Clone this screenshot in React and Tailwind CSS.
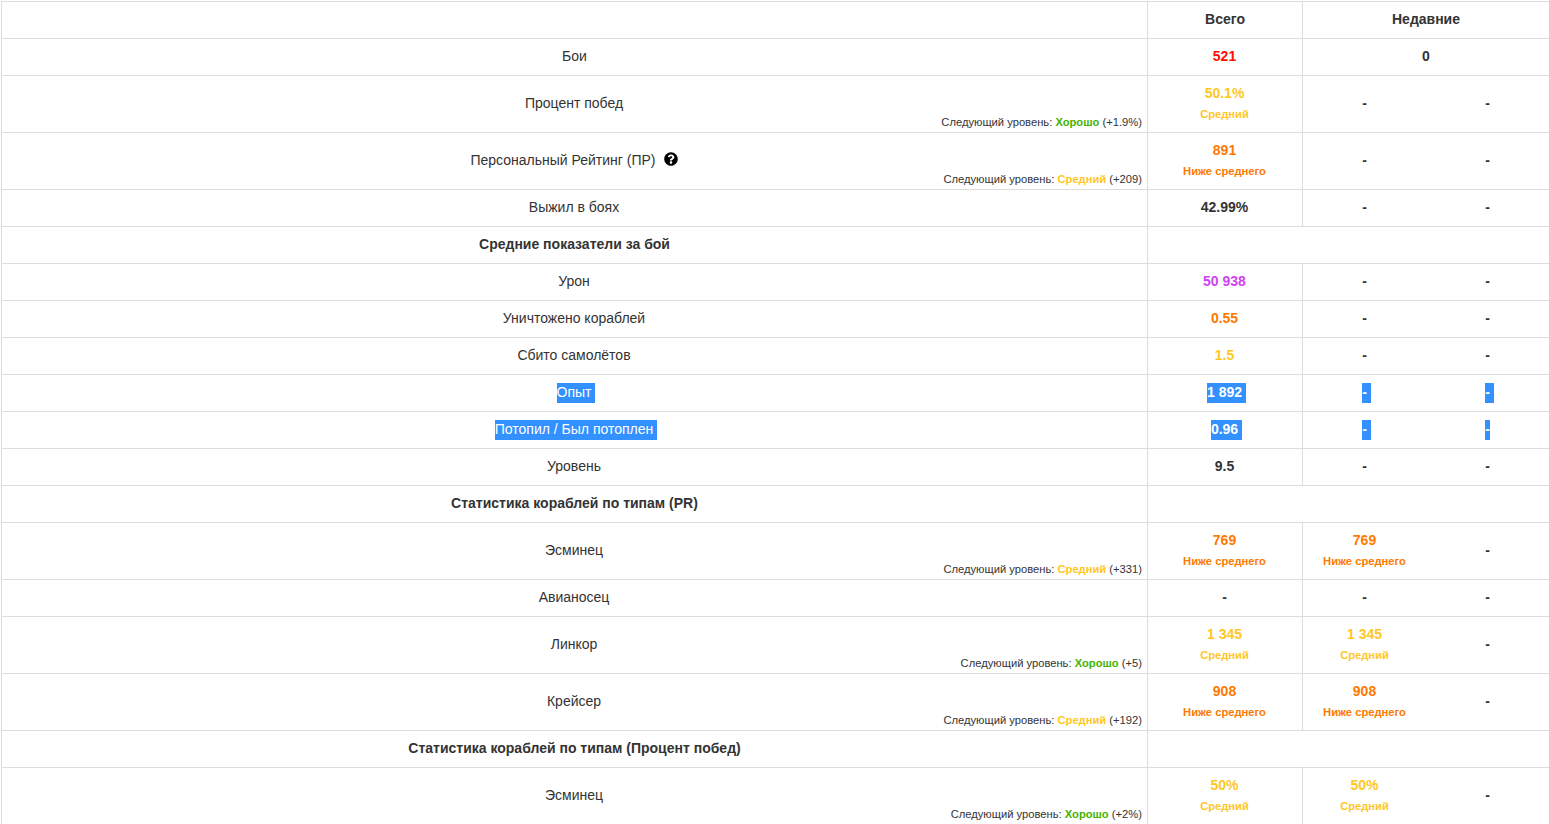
import React from 'react';
import { FaQuestionCircle } from 'react-icons/fa';

const BAD = 'text-[#fe0e00]';
const LOW = 'text-[#fe7903]';
const AVG = 'text-[#ffc71f]';
const GOOD = 'text-[#44b300]';
const PURPLE = 'text-[#d042f3]';
const PLAIN = 'text-[#333333]';

const levelColor = { 'Ниже среднего': LOW, 'Средний': AVG, 'Хорошо': GOOD };

const cellBase = 'border-t border-[#dddddd] text-center align-middle';
const cellPad = 'pt-[7px] pb-[9px] px-2';
const cellPadLeft = 'pt-[7px] pb-[9px] pl-2 pr-[9px]';

// selected text has the browser's trailing space highlighted too
function Selected({ children, tight }) {
  return (
    <span className={`-mb-px inline-block bg-[#3390ff] pb-[2px] leading-[18px] text-white ${tight ? '' : 'pr-1 -mr-1'}`}>
      {children}
    </span>
  );
}

function Stat({ value, color = PLAIN, level, selected, tight }) {
  if (value === undefined) return <div className={`${PLAIN} leading-5`}>-</div>;
  return (
    <>
      <div className={`${selected ? '' : color} leading-5`}>
        {selected ? <Selected tight={tight}>{value}</Selected> : value}
      </div>
      {level && <div className={`${levelColor[level]} mt-px -mb-px text-[11.2px] leading-5`}>{level}</div>}
    </>
  );
}

function NextLevel({ level, diff }) {
  return (
    <div className="pt-[2px] pr-[5px] text-right text-[11.2px] leading-[14px] text-[#333333]">
      Следующий уровень: <b className={levelColor[level]}>{level}</b> ({diff})
    </div>
  );
}

function Row({ label, next, help, selected, total, recent, last }) {
  return (
    <tr>
      <td className={`${cellBase} border-l ${next ? 'p-0 align-top' : cellPadLeft}`}>
        <div className={`leading-5 ${next ? 'pt-[17px] pr-px' : ''}`}>
          {selected ? <Selected>{label}</Selected> : label}
          {help && <FaQuestionCircle className="ml-[8px] inline-block size-[14px] align-[-1px] text-black" />}
        </div>
        {next && <NextLevel {...next} />}
      </td>
      <td className={`${cellBase} border-l ${cellPadLeft} font-bold`}>
        <Stat {...total} selected={selected} />
      </td>
      <td className={`${cellBase} border-l ${cellPad} font-bold`}>
        <Stat {...recent} selected={selected} value={recent?.value ?? (selected ? '-' : undefined)} />
      </td>
      <td className={`${cellBase} ${cellPad} font-bold`}>
        <Stat {...last} selected={selected} tight={selected === 'tight'} value={selected ? '-' : undefined} />
      </td>
    </tr>
  );
}

function Section({ title }) {
  return (
    <tr>
      <td className={`${cellBase} border-l ${cellPad} font-bold leading-5`}>{title}</td>
      <td colSpan={3} className={`${cellBase} border-l ${cellPad} leading-5`}>&nbsp;</td>
    </tr>
  );
}

export default function App() {
  return (
    <div className="h-screen overflow-hidden bg-white pt-px pl-px font-['Liberation_Sans',Arial,sans-serif] text-sm text-[#333333]">
      <table className="w-[1548px] table-fixed border-separate border-spacing-0">
        <colgroup>
          <col className="w-[1146px]" />
          <col className="w-[155px]" />
          <col className="w-[124px]" />
          <col className="w-[123px]" />
        </colgroup>
        <tbody>
          <tr>
            <td className={`${cellBase} border-l ${cellPad} leading-5`}>&nbsp;</td>
            <td className={`${cellBase} border-l ${cellPad} font-bold leading-5`}>Всего</td>
            <td colSpan={2} className={`${cellBase} border-l ${cellPad} font-bold leading-5`}>Недавние</td>
          </tr>
          <tr>
            <td className={`${cellBase} border-l ${cellPad} leading-5`}>Бои</td>
            <td className={`${cellBase} border-l ${cellPadLeft} font-bold leading-5 ${BAD}`}>521</td>
            <td colSpan={2} className={`${cellBase} border-l ${cellPad} font-bold leading-5`}>0</td>
          </tr>
          <Row
            label="Процент побед"
            next={{ level: 'Хорошо', diff: '+1.9%' }}
            total={{ value: '50.1%', color: AVG, level: 'Средний' }}
          />
          <Row
            label="Персональный Рейтинг (ПР)"
            help
            next={{ level: 'Средний', diff: '+209' }}
            total={{ value: '891', color: LOW, level: 'Ниже среднего' }}
          />
          <Row label="Выжил в боях" total={{ value: '42.99%' }} />
          <Section title="Средние показатели за бой" />
          <Row label="Урон" total={{ value: '50 938', color: PURPLE }} />
          <Row label="Уничтожено кораблей" total={{ value: '0.55', color: LOW }} />
          <Row label="Сбито самолётов" total={{ value: '1.5', color: AVG }} />
          <Row label="Опыт" selected total={{ value: '1 892' }} />
          <Row label="Потопил / Был потоплен" selected="tight" total={{ value: '0.96' }} />
          <Row label="Уровень" total={{ value: '9.5' }} />
          <Section title="Статистика кораблей по типам (PR)" />
          <Row
            label="Эсминец"
            next={{ level: 'Средний', diff: '+331' }}
            total={{ value: '769', color: LOW, level: 'Ниже среднего' }}
            recent={{ value: '769', color: LOW, level: 'Ниже среднего' }}
          />
          <Row label="Авианосец" />
          <Row
            label="Линкор"
            next={{ level: 'Хорошо', diff: '+5' }}
            total={{ value: '1 345', color: AVG, level: 'Средний' }}
            recent={{ value: '1 345', color: AVG, level: 'Средний' }}
          />
          <Row
            label="Крейсер"
            next={{ level: 'Средний', diff: '+192' }}
            total={{ value: '908', color: LOW, level: 'Ниже среднего' }}
            recent={{ value: '908', color: LOW, level: 'Ниже среднего' }}
          />
          <Section title="Статистика кораблей по типам (Процент побед)" />
          <Row
            label="Эсминец"
            next={{ level: 'Хорошо', diff: '+2%' }}
            total={{ value: '50%', color: AVG, level: 'Средний' }}
            recent={{ value: '50%', color: AVG, level: 'Средний' }}
          />
        </tbody>
      </table>
    </div>
  );
}
